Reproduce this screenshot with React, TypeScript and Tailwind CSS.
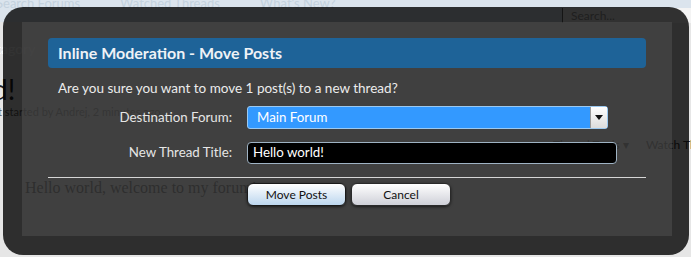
import React from 'react';

const font = { fontFamily: 'Lato, "Liberation Sans", sans-serif' };

function PageBehind() {
  return (
    <div className="flex h-full flex-col bg-[#e6e6e6]">
      <div className="flex h-[22px] items-start bg-[#dbe4ed]">
        <div className="flex flex-1 gap-10 text-[13px] leading-[10px] text-[#c4d2de] -mt-[2px]">
          <span className="-ml-[4px]">Search Forums</span>
          <span>Watched Threads</span>
          <span>What's New?</span>
        </div>
        <div className="mt-[8px] flex h-[15px] w-[129px] items-center border-l border-[#6c6c6c] bg-[#f4f4f4] pl-[8px] text-[12px] text-[#9a9a9a]">
          Search...
        </div>
      </div>
      <div className="mt-[18px] -ml-[4px] text-[14px] leading-[18px] text-white">tagory</div>
      <div className="mt-[16px] -ml-[8px] text-[28px] leading-[30px] text-[#222]">d!</div>
      <div className="-ml-[6px] mt-[1px] text-[11px] leading-[14px] text-[#5a5a5a]">rt started by Andrej, 2 minutes ago</div>
      <div className="mt-[19px] flex gap-[17px] pl-[553px] text-[12px] leading-[14px] text-[#333] whitespace-nowrap">
        <span>Thread Tools ▾</span>
        <span>Watch Thread</span>
      </div>
      <div className="ml-[25px] mt-[26px] text-[16px] leading-[20px] text-black" style={{ fontFamily: '"Liberation Serif", serif' }}>
        Hello world, welcome to my forum!
      </div>
    </div>
  );
}

export default function App() {
  return (
    <div className="relative h-[257px] w-[691px] overflow-hidden" style={font}>
      <PageBehind />

      <div className="absolute left-[3px] top-[7px] h-[248px] w-[686px] rounded-[20px] bg-black/80 pb-[19px] pl-[19px] pr-[17px] pt-[15px]">
        <div className="h-full bg-[#4c4c4c]/60 px-[26px] pt-[16px]">
          <div className="flex h-[30px] items-center rounded-[4px] bg-[#1e6398] pl-[10px] text-[16px] font-bold text-[#eef2f6]">
            Inline Moderation - Move Posts
          </div>

          <p className="mt-[12px] pl-[10px] text-[13.5px] leading-[16px] text-[#ececec]">
            Are you sure you want to move 1 post(s) to a new thread?
          </p>

          <div className="mt-[10px] grid grid-cols-[184px_1fr] items-center gap-x-[15px] gap-y-[13px] text-[13.3px] text-[#e6e6e6]">
            <label className="text-right">Destination Forum:</label>
            <div className="flex h-[23px] w-[361px] items-center justify-between rounded-[3px] border border-[#9cc9f0] bg-[#3399ff] pl-[9px] text-white">
              <span>Main Forum</span>
              <span className="flex h-[21px] w-[17px] items-center justify-center border-l border-[#9a9a9a] bg-gradient-to-b from-white to-[#dcdcdc]">
                <svg width="8" height="5" viewBox="0 0 8 5"><path d="M0 0h8L4 5z" fill="#111" /></svg>
              </span>
            </div>

            <label className="text-right">New Thread Title:</label>
            <div className="flex h-[22px] w-[370px] items-center rounded-[4px] border border-[#9fb3c4] bg-black pl-[5px] text-white">
              Hello world!
            </div>
          </div>

          <div className="mt-[13px] h-px bg-[#d6d6d6]" />

          <div className="mt-[5px] flex gap-[5px] pl-[199px] text-[12px] text-[#111]">
            <button className="h-[23px] w-[99px] rounded-[6px] border border-[#1a1a1a] bg-gradient-to-b from-white to-[#bcd6ee] shadow-[0_1px_3px_rgba(0,0,0,0.6)]">
              Move Posts
            </button>
            <button className="h-[23px] w-[100px] rounded-[6px] border border-[#2a2a2a] bg-gradient-to-b from-white to-[#cfd0d8] shadow-[0_1px_3px_rgba(0,0,0,0.6)]">
              Cancel
            </button>
          </div>
        </div>
      </div>
    </div>
  );
}
